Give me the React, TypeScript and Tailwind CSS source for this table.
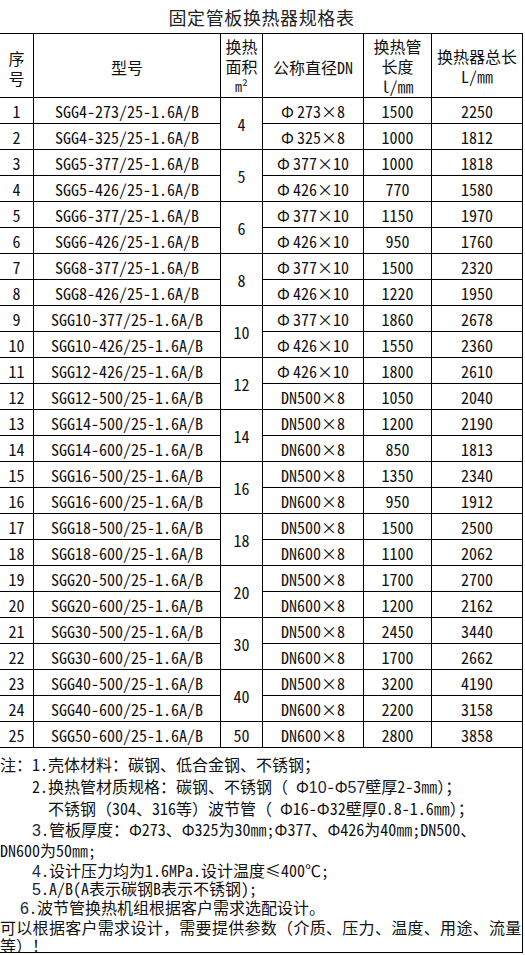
import React from "react";

type Row = { model: string; area?: string; span?: number; pre: "Φ" | "DN"; d: string; t: string; len: string; total: string };

const rows: Row[] = [
  { model: "SGG4-273/25-1.6A/B", area: "4", span: 2, pre: "Φ", d: "273", t: "8", len: "1500", total: "2250" },
  { model: "SGG4-325/25-1.6A/B", pre: "Φ", d: "325", t: "8", len: "1000", total: "1812" },
  { model: "SGG5-377/25-1.6A/B", area: "5", span: 2, pre: "Φ", d: "377", t: "10", len: "1000", total: "1818" },
  { model: "SGG5-426/25-1.6A/B", pre: "Φ", d: "426", t: "10", len: "770", total: "1580" },
  { model: "SGG6-377/25-1.6A/B", area: "6", span: 2, pre: "Φ", d: "377", t: "10", len: "1150", total: "1970" },
  { model: "SGG6-426/25-1.6A/B", pre: "Φ", d: "426", t: "10", len: "950", total: "1760" },
  { model: "SGG8-377/25-1.6A/B", area: "8", span: 2, pre: "Φ", d: "377", t: "10", len: "1500", total: "2320" },
  { model: "SGG8-426/25-1.6A/B", pre: "Φ", d: "426", t: "10", len: "1220", total: "1950" },
  { model: "SGG10-377/25-1.6A/B", area: "10", span: 2, pre: "Φ", d: "377", t: "10", len: "1860", total: "2678" },
  { model: "SGG10-426/25-1.6A/B", pre: "Φ", d: "426", t: "10", len: "1550", total: "2360" },
  { model: "SGG12-426/25-1.6A/B", area: "12", span: 2, pre: "Φ", d: "426", t: "10", len: "1800", total: "2610" },
  { model: "SGG12-500/25-1.6A/B", pre: "DN", d: "500", t: "8", len: "1050", total: "2040" },
  { model: "SGG14-500/25-1.6A/B", area: "14", span: 2, pre: "DN", d: "500", t: "8", len: "1200", total: "2190" },
  { model: "SGG14-600/25-1.6A/B", pre: "DN", d: "600", t: "8", len: "850", total: "1813" },
  { model: "SGG16-500/25-1.6A/B", area: "16", span: 2, pre: "DN", d: "500", t: "8", len: "1350", total: "2340" },
  { model: "SGG16-600/25-1.6A/B", pre: "DN", d: "600", t: "8", len: "950", total: "1912" },
  { model: "SGG18-500/25-1.6A/B", area: "18", span: 2, pre: "DN", d: "500", t: "8", len: "1500", total: "2500" },
  { model: "SGG18-600/25-1.6A/B", pre: "DN", d: "600", t: "8", len: "1100", total: "2062" },
  { model: "SGG20-500/25-1.6A/B", area: "20", span: 2, pre: "DN", d: "500", t: "8", len: "1700", total: "2700" },
  { model: "SGG20-600/25-1.6A/B", pre: "DN", d: "600", t: "8", len: "1200", total: "2162" },
  { model: "SGG30-500/25-1.6A/B", area: "30", span: 2, pre: "DN", d: "500", t: "8", len: "2450", total: "3440" },
  { model: "SGG30-600/25-1.6A/B", pre: "DN", d: "600", t: "8", len: "1700", total: "2662" },
  { model: "SGG40-500/25-1.6A/B", area: "40", span: 2, pre: "DN", d: "500", t: "8", len: "3200", total: "4190" },
  { model: "SGG40-600/25-1.6A/B", pre: "DN", d: "600", t: "8", len: "2200", total: "3158" },
  { model: "SGG50-600/25-1.6A/B", area: "50", span: 1, pre: "DN", d: "600", t: "8", len: "2800", total: "3858" },
];

const cell = "bg-white flex items-center justify-center whitespace-nowrap";

function Spec({ r }: { r: Row }) {
  return (
    <span className="inline-flex items-center">
      {r.pre === "Φ" ? <span className="inline-block w-4 text-left">Φ</span> : <span>DN</span>}
      <span>{r.d}</span>
      <span className="inline-block w-4 text-center">×</span>
      <span>{r.t}</span>
    </span>
  );
}

const B = ({ children }: { children: React.ReactNode }) => (
  <span className="font-['Liberation_Sans',sans-serif] text-[#1c2744]">{children}</span>
);

export default function App() {
  return (
    <div className="w-[525px] bg-white text-[#111] font-['Noto_Sans_Mono_CJK_SC','Noto_Sans_CJK_SC',monospace] text-[16px]">
      <div className="h-[33px] w-[523px] flex items-center justify-center pt-[1px] text-[18px] tracking-[0.6px] text-[#222]">
        固定管板换热器规格表
      </div>
      <div className="grid w-[523px] grid-cols-[33px_186px_41px_100px_67px_90px] grid-rows-[63px_repeat(25,25px)] gap-px bg-black pt-px pr-px pb-px leading-[20px]">
        <div className={`${cell} col-start-1 flex-col pt-[4px]`}>
          <span>序</span>
          <span>号</span>
        </div>
        <div className={`${cell} col-start-2 pt-[2px]`}>型号</div>
        <div className={`${cell} col-start-3 flex-col`}>
          <span>换热</span>
          <span>面积</span>
          <span className="text-[14px]">m²</span>
        </div>
        <div className={`${cell} col-start-4 pt-[2px]`}>公称直径DN</div>
        <div className={`${cell} col-start-5 flex-col`}>
          <span>换热管</span>
          <span>长度</span>
          <span>l/㎜</span>
        </div>
        <div className={`${cell} col-start-6 flex-col pt-[1px]`}>
          <span>换热器总长</span>
          <span>L/㎜</span>
        </div>
        {rows.map((r, i) => (
          <React.Fragment key={i}>
            <div className={`${cell} col-start-1`}>{i + 1}</div>
            <div className={`${cell} col-start-2`}>{r.model}</div>
            {r.area && (
              <div className={`${cell} col-start-3 ${r.span === 2 ? "row-span-2" : ""}`}>{r.area}</div>
            )}
            <div className={`${cell} col-start-4`}>
              <Spec r={r} />
            </div>
            <div className={`${cell} col-start-5`}>{r.len}</div>
            <div className={`${cell} col-start-6`}>{r.total}</div>
          </React.Fragment>
        ))}
      </div>
      <div className="w-[523px] h-[205px] border-r border-b border-black pt-[5px] whitespace-pre text-[#111]">
        <div className="h-[22px] leading-[22px]">注：1.壳体材料：碳钢、低合金钢、不锈钢；</div>
        <div className="h-[22px] leading-[22px] pl-[32px]">
          2.换热管材质规格：碳钢、不锈钢（ Φ<B>10</B>-Φ<B>57</B>壁厚2-3㎜）；
        </div>
        <div className="h-[22px] leading-[22px] pl-[48px]">不锈钢（304、316等）波节管（ Φ16-Φ32壁厚0.8-1.6㎜）；</div>
        <div className="h-[21px] leading-[21px] pl-[32px]">
          <B>3</B>.管板厚度：Φ273、Φ325为30㎜;Φ377、Φ426为40㎜;DN500、
        </div>
        <div className="h-[21px] leading-[21px]">DN600为50㎜;</div>
        <div className="h-[18px] leading-[18px] pl-[32px]">
          <B>4</B>.设计压力均为1.6MPa.设计温度≤400℃;
        </div>
        <div className="h-[18px] leading-[18px] pl-[32px]">
          <B>5</B>.A/B(A表示碳钢B表示不锈钢);
        </div>
        <div className="h-[20px] leading-[20px] pl-[20px]">
          <B>6</B>.波节管换热机组根据客户需求选配设计。
        </div>
        <div className="h-[20px] leading-[20px] tracking-[0.3px]">可以根据客户需求设计，需要提供参数（介质、压力、温度、用途、流量</div>
        <div className="h-[16px] leading-[16px]">等）！</div>
      </div>
    </div>
  );
}
